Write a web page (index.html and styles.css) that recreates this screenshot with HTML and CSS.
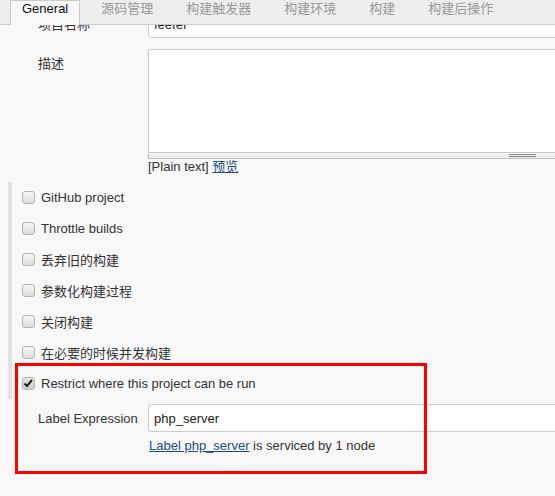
FILE: index.html
```html
<!DOCTYPE html>
<html lang="zh-CN">
<head>
    <meta charset="UTF-8">
    <title>Job Config</title>
    <link rel="stylesheet" href="styles.css">
</head>
<body>
    <!-- Sticky section tabs -->
    <div class="tabbar">
        <div class="tab active">General</div>
        <div class="tab">源码管理</div>
        <div class="tab">构建触发器</div>
        <div class="tab">构建环境</div>
        <div class="tab">构建</div>
        <div class="tab">构建后操作</div>
    </div>

    <main class="config">
        <div class="row">
            <label class="row-label">项目名称</label>
            <input class="text-input" type="text" value="feefef">
        </div>

        <div class="row row-top">
            <label class="row-label">描述</label>
            <div class="row-field">
                <textarea class="textarea"></textarea>
                <div class="grippie"><span class="grippie-lines"></span></div>
                <div class="hint">[Plain text] <a href="#">预览</a></div>
            </div>
        </div>

        <div class="options">
            <div class="option"><span class="checkbox"></span>GitHub project</div>
            <div class="option"><span class="checkbox"></span>Throttle builds</div>
            <div class="option"><span class="checkbox"></span>丢弃旧的构建</div>
            <div class="option"><span class="checkbox"></span>参数化构建过程</div>
            <div class="option"><span class="checkbox"></span>关闭构建</div>
            <div class="option"><span class="checkbox"></span>在必要的时候并发构建</div>
            <div class="option">
                <span class="checkbox checked">
                    <svg width="11" height="11" viewBox="0 0 11 11"><path d="M1.5 5.5 L4 8 L9 2" fill="none" stroke="#222" stroke-width="2"/></svg>
                </span>Restrict where this project can be run
            </div>
        </div>

        <div class="row row-nested">
            <label class="row-label">Label Expression</label>
            <input class="text-input" type="text" value="php_server">
        </div>
        <div class="help-line"><a href="#">Label php_server</a> is serviced by 1 node</div>

        <!-- annotation box -->
        <div class="highlight"></div>
    </main>
</body>
</html>
```

FILE: styles.css
```css
* {
    box-sizing: border-box;
}

html {
    background: #f8f8f8;
}

body {
    margin: 0;
    min-height: 100vh;
    background: #f8f8f8;
    font-family: "Liberation Sans", "Noto Sans CJK SC", sans-serif;
    font-size: 13px;
    color: #333;
    overflow: hidden;
}

a {
    color: #204a87;
    text-decoration: underline;
}

/* Tabs */
.tabbar {
    position: fixed;
    top: 0;
    left: 0;
    right: 0;
    height: 25px;
    display: flex;
    gap: 9px;
    padding-left: 10px;
    background: #eeeeee;
    border-bottom: 1px solid #cccccc;
    z-index: 2;
}

.tab {
    height: 25px;
    padding: 0 11px;
    border: 1px solid transparent;
    border-bottom: 0;
    line-height: 15px;
    color: #9a9a9a;
    white-space: nowrap;
}

.tab.active {
    background: #f8f8f8;
    border-color: #cccccc;
    color: #111;
}

/* Form */
.config {
    position: relative;
    width: 100%;
    min-height: 100vh;
    padding-top: 10px;
    overflow: hidden;
}

.row {
    display: grid;
    grid-template-columns: 148px calc(100% - 128px);
    align-items: center;
    height: 28px;
    margin-bottom: 11px;
}

.row-top {
    align-items: start;
    height: auto;
    margin-bottom: 0;
}

.row-top .row-label {
    padding-top: 7px;
}

.row-label {
    padding-left: 38px;
    line-height: 15px;
    white-space: nowrap;
}

.text-input {
    display: block;
    width: 100%;
    height: 28px;
    padding: 0 5px;
    border: 1px solid #cccccc;
    border-radius: 3px;
    background: #fff;
    font: inherit;
    color: #222;
}

.textarea {
    display: block;
    width: 100%;
    height: 104px;
    margin: 0;
    border: 1px solid #c6c6c6;
    border-radius: 3px 3px 0 0;
    background: #fff;
    resize: none;
}

.grippie {
    height: 5px;
    background: #eeeeee;
    border: 1px solid #bbbbbb;
    border-top: 0;
}

.grippie-lines {
    display: block;
    width: 27px;
    height: 3px;
    margin: 1px 0 0 360px;
    border-top: 1px solid #888;
    border-bottom: 1px solid #888;
}

.hint {
    height: 15px;
    line-height: 15px;
}

/* Checkbox options */
.options {
    margin: 8px 0 0 8px;
    border-left: 4px solid #e3e3e3;
}

.option {
    display: flex;
    align-items: center;
    height: 31px;
    padding-left: 10px;
    white-space: nowrap;
}

.checkbox {
    display: flex;
    align-items: center;
    justify-content: center;
    width: 13px;
    height: 13px;
    margin-right: 6px;
    border: 1px solid #b4b4b4;
    border-radius: 3px;
    background: linear-gradient(#f6f6f6, #dcdcdc);
}

.checkbox.checked {
    background: linear-gradient(#e6e6e6, #cfcfcf);
}

.row-nested {
    margin: 5px 0 0;
}

.help-line {
    height: 15px;
    margin: 6px 0 0 148px;
    line-height: 15px;
    padding-left: 1px;
}

.highlight {
    position: absolute;
    left: 15px;
    top: 363px;
    width: 412px;
    height: 111px;
    border: 3px solid #ff0000;
    pointer-events: none;
}
```
